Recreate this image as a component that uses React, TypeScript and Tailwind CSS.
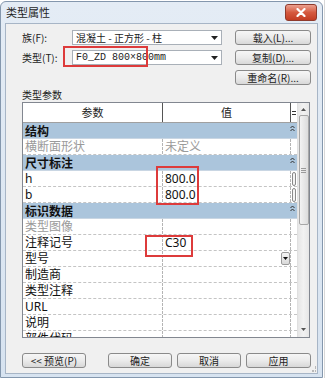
import React from "react";

const cjk = "'Noto Sans CJK SC', sans-serif";
const ui = "'Noto Sans', 'Noto Sans CJK SC', sans-serif";

function Btn({ label, w }: { label: string; w: string }) {
  return (
    <div
      className={`${w} h-[15px] flex items-center justify-center rounded-[3px] border border-[#8a8a8a] bg-gradient-to-b from-[#f6f6f6] via-[#ebebeb] to-[#d8d8d8] text-[10px] text-[#222] leading-none`}
      style={{ fontFamily: cjk }}
    >
      {label}
    </div>
  );
}

function Combo({ text, mono }: { text: string; mono?: boolean }) {
  return (
    <div className="w-[150px] h-[15px] border border-[#a9b0b8] bg-white flex items-center pl-[3px] pr-[3px]">
      <span
        className="flex-1 text-[10px] leading-none text-[#222] whitespace-pre"
        style={{ fontFamily: mono ? "'Liberation Mono', 'Noto Sans CJK SC', monospace" : cjk }}
      >
        {text}
      </span>
      <svg width="7" height="4" viewBox="0 0 7 4">
        <path d="M0 0h7L3.5 4z" fill="#222" />
      </svg>
    </div>
  );
}

type Row = {
  group?: boolean;
  label: string;
  value?: string;
  gray?: boolean;
  thumb?: boolean;
  dropdown?: boolean;
};

const rows: Row[] = [
  { group: true, label: "结构" },
  { label: "横断面形状", value: "未定义", gray: true },
  { group: true, label: "尺寸标注" },
  { label: "h", value: "800.0", thumb: true },
  { label: "b", value: "800.0", thumb: true },
  { group: true, label: "标识数据" },
  { label: "类型图像", gray: true },
  { label: "注释记号", value: "C30" },
  { label: "型号", dropdown: true },
  { label: "制造商" },
  { label: "类型注释" },
  { label: "URL" },
  { label: "说明" },
  { label: "部件代码" },
];

function Collapse() {
  return (
    <svg width="5" height="7" viewBox="0 0 5 7">
      <path d="M0.5 3L2.5 1L4.5 3M0.5 6L2.5 4L4.5 6" stroke="#333" strokeWidth="1" fill="none" />
    </svg>
  );
}

export default function App() {
  return (
    <div className="relative w-[327px] h-[378px] bg-white overflow-hidden flex">
      {/* window */}
      <div className="w-[323px] h-[377px] mt-[1px] rounded-t-[6px] border border-[#8497ad] bg-gradient-to-b from-[#e4ecf5] to-[#d7e3f0] flex flex-col">
        {/* title bar */}
        <div className="h-[21px] flex items-start relative shrink-0">
          <span className="ml-[5px] mt-[5px] text-[11px] leading-none text-[#1e1e1e]" style={{ fontFamily: cjk }}>
            类型属性
          </span>
          <div className="absolute right-[5px] top-[2px] w-[32px] h-[17px] rounded-[3px] border border-[#8f3a2c] bg-gradient-to-b from-[#eba08f] via-[#d5593f] to-[#c33c22] flex items-center justify-center">
            <svg width="10" height="9" viewBox="0 0 10 9">
              <path d="M1.5 1L8.5 8M8.5 1L1.5 8" stroke="white" strokeWidth="2.2" strokeLinecap="round" />
            </svg>
          </div>
        </div>
        {/* content */}
        <div className="mx-[4px] mb-[3px] flex-1 bg-[#f0f0f0] border border-[#a7b5c6] flex flex-col pl-[16px] pt-[6px] relative">
          {/* top rows */}
          <div className="flex items-center h-[15px]">
            <span className="w-[50px] text-[10px] leading-none text-[#222]" style={{ fontFamily: cjk }}>
              族(F):
            </span>
            <Combo text="混凝土 - 正方形 - 柱" />
            <div className="ml-[13px]">
              <Btn label="载入(L)..." w="w-[76px]" />
            </div>
          </div>
          <div className="flex items-center h-[15px] mt-[5px]">
            <span className="w-[50px] text-[10px] leading-none text-[#222]" style={{ fontFamily: cjk }}>
              类型(T):
            </span>
            <Combo text="F0_ZD 800×800mm" mono />
            <div className="ml-[13px]">
              <Btn label="复制(D)..." w="w-[76px]" />
            </div>
          </div>
          <div className="flex items-center h-[15px] mt-[5px] pl-[213px]">
            <Btn label="重命名(R)..." w="w-[76px]" />
          </div>
          <div className="mt-[3px] h-[13px] text-[10px] leading-[13px] text-[#222]" style={{ fontFamily: cjk }}>
            类型参数
          </div>
          {/* table */}
          <div className="mt-[1px] w-[288px] h-[236px] border border-[#828790] bg-white flex overflow-hidden">
            <div className="w-[274px] flex flex-col">
              {/* header */}
              <div className="h-[20px] shrink-0 flex border-b border-[#a0a0a0] bg-white">
                <div className="w-[140px] flex items-center justify-center border-r border-[#555] text-[11px] text-[#222]" style={{ fontFamily: cjk }}>
                  参数
                </div>
                <div className="w-[128px] flex items-center justify-center border-r border-[#555] text-[11px] text-[#222]" style={{ fontFamily: cjk }}>
                  值
                </div>
                <div className="flex-1 flex items-center justify-center">
                  <div className="w-[4px] h-[4px] border-t border-b border-[#333]" />
                </div>
              </div>
              {rows.map((r, i) =>
                r.group ? (
                  <div key={i} className="h-[16px] shrink-0 flex items-center bg-[#abc5dc] border-b border-[#c9d6e3]">
                    <span className="flex-1 pl-[2px] text-[12px] font-bold leading-none text-[#111]" style={{ fontFamily: cjk }}>
                      {r.label}
                    </span>
                    <span className="w-[6px] mr-[1px] self-start mt-[2px]">
                      <Collapse />
                    </span>
                  </div>
                ) : (
                  <div key={i} className="h-[16px] shrink-0 flex border-b border-dashed border-[#c4c4c4]">
                    <div
                      className={`w-[140px] pl-[2px] flex items-center border-r border-dashed border-[#b4b4b4] text-[12px] leading-none ${r.gray ? "text-[#9a9a9a]" : "text-[#111]"}`}
                      style={{ fontFamily: ui }}
                    >
                      {r.label}
                    </div>
                    <div
                      className={`w-[128px] pl-[2px] flex items-center border-r border-dashed border-[#b4b4b4] text-[12px] leading-none ${r.gray ? "text-[#9a9a9a]" : "text-[#111]"}`}
                      style={{ fontFamily: ui }}
                    >
                      <span className="flex-1">{r.value ?? ""}</span>
                      {r.dropdown && (
                        <div className="w-[9px] h-[13px] mr-[0px] border border-[#9a9a9a] rounded-[2px] bg-gradient-to-b from-[#f5f5f5] to-[#d9d9d9] flex items-center justify-center">
                          <svg width="5" height="3" viewBox="0 0 5 3">
                            <path d="M0 0h5L2.5 3z" fill="#111" />
                          </svg>
                        </div>
                      )}
                    </div>
                    <div className="flex-1 flex items-center justify-center">
                      {r.thumb && <div className="w-[4px] h-[14px] rounded-[2px] border border-[#8a8a8a] bg-[#f4f4f4]" />}
                    </div>
                  </div>
                )
              )}
            </div>
            {/* scrollbar */}
            <div className="flex-1 bg-gradient-to-r from-[#e6e6e6] via-[#f2f2f2] to-[#e6e6e6] border-l border-[#e0e0e0] flex flex-col items-center">
              <div className="h-[12px] w-full flex items-center justify-center">
                <svg width="5" height="3" viewBox="0 0 5 3">
                  <path d="M0 3h5L2.5 0z" fill="#555" />
                </svg>
              </div>
              <div className="w-[10px] h-[110px] rounded-[2px] border border-[#a7a7a7] bg-gradient-to-r from-[#f3f3f3] to-[#dcdcdc] flex flex-col items-center justify-center gap-[1px]">
                <div className="w-[5px] h-[1px] bg-[#9a9a9a]" />
                <div className="w-[5px] h-[1px] bg-[#9a9a9a]" />
                <div className="w-[5px] h-[1px] bg-[#9a9a9a]" />
              </div>
              <div className="flex-1" />
              <div className="h-[12px] w-full flex items-center justify-center mb-[2px]">
                <svg width="5" height="3" viewBox="0 0 5 3">
                  <path d="M0 0h5L2.5 3z" fill="#555" />
                </svg>
              </div>
            </div>
          </div>
          {/* bottom buttons */}
          <div className="mt-[15px] flex items-center">
            <Btn label="<< 预览(P)" w="w-[64px]" />
            <div className="ml-[22px]">
              <Btn label="确定" w="w-[64px]" />
            </div>
            <div className="ml-[5px]">
              <Btn label="取消" w="w-[64px]" />
            </div>
            <div className="ml-[5px]">
              <Btn label="应用" w="w-[65px]" />
            </div>
          </div>
          {/* resize grip */}
          <div className="absolute right-[1px] bottom-[1px] w-[6px] h-[6px] grid grid-cols-3 gap-[1px]">
            <div />
            <div />
            <div className="bg-[#b8b8b8]" />
            <div />
            <div className="bg-[#b8b8b8]" />
            <div className="bg-[#b8b8b8]" />
          </div>
        </div>
      </div>
      {/* background lines */}
      <div className="flex-1 border-l border-[#d8d8d8] ml-[1px]" />

      {/* red highlight boxes */}
      <div className="absolute left-[63px] top-[46px] w-[85px] h-[21px] border-2 border-[#dd3b3b]" />
      <div className="absolute left-[156px] top-[166px] w-[43px] h-[39px] border-2 border-[#dd3b3b]" />
      <div className="absolute left-[145px] top-[235px] w-[48px] h-[22px] border-2 border-[#dd3b3b]" />
    </div>
  );
}
